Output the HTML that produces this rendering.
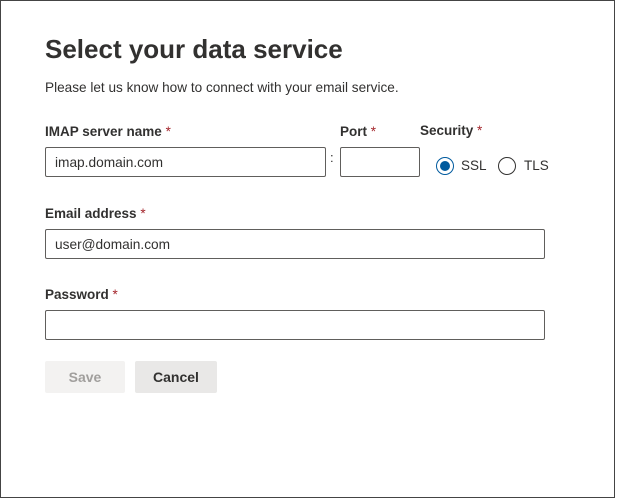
<!DOCTYPE html>
<html><head><style>
body{margin:0;background:#fff;font-family:"Liberation Sans",sans-serif;color:#323130;}
.frame{position:absolute;left:0;top:0;width:613px;height:496px;border:1px solid #444;}
.a{position:absolute;}
h1{position:absolute;left:45px;top:34px;margin:0;font-size:26px;font-weight:600;color:#323130;}
.sub{left:45px;top:80px;font-size:13.6px;}
.lbl{font-size:13.5px;font-weight:bold;color:#323130;}
.lbl span{color:#a4262c;font-weight:normal;}
.in{position:absolute;border:1px solid #605e5c;border-radius:2px;height:30px;box-sizing:border-box;font-size:13.7px;padding:7px 9px;}
.rad{position:absolute;width:18px;height:18px;border:1px solid #323130;border-radius:50%;box-sizing:border-box;}
.btn{position:absolute;top:361px;height:32px;border-radius:2px;font-size:14px;font-weight:bold;text-align:center;line-height:32px;}
</style></head><body>
<div class="frame"></div>
<h1>Select your data service</h1>
<div class="a sub">Please let us know how to connect with your email service.</div>
<div class="a lbl" style="left:45px;top:124px">IMAP server name <span>*</span></div>
<div class="a lbl" style="left:340px;top:124px">Port <span>*</span></div>
<div class="a lbl" style="left:420px;top:123px">Security <span>*</span></div>
<div class="in" style="left:45px;top:147px;width:281px">imap.domain.com</div>
<div class="a" style="left:330px;top:150px;font-size:13px">:</div>
<div class="in" style="left:340px;top:147px;width:80px"></div>
<div class="rad" style="left:436px;top:157px;border-color:#005a9e"><div style="position:absolute;left:3px;top:3px;width:10px;height:10px;border-radius:50%;background:#005a9e"></div></div>
<div class="a" style="left:461px;top:158px;font-size:13.5px">SSL</div>
<div class="rad" style="left:498px;top:157px"></div>
<div class="a" style="left:524px;top:158px;font-size:13.5px">TLS</div>
<div class="a lbl" style="left:45px;top:206px">Email address <span>*</span></div>
<div class="in" style="left:45px;top:229px;width:500px">user@domain.com</div>
<div class="a lbl" style="left:45px;top:287px">Password <span>*</span></div>
<div class="in" style="left:45px;top:310px;width:500px"></div>
<div class="btn" style="left:45px;width:80px;background:#f3f2f1;color:#a19f9d">Save</div>
<div class="btn" style="left:135px;width:82px;background:#e9e8e7;color:#323130">Cancel</div>
</body></html>
